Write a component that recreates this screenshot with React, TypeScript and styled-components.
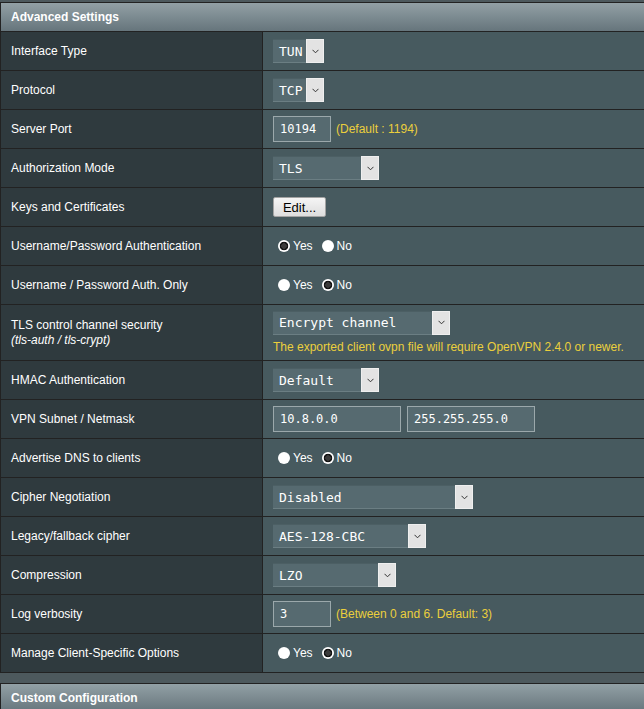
import React from "react";
import styled, { createGlobalStyle } from "styled-components";

const colors = {
  page: "#4D595D",
  border: "#222",
  th: "#2F3A3E",
  td: "#475A5F",
  field: "#566A70",
  hint: "#EBCF3C",
};

const GlobalStyle = createGlobalStyle`
  html, body {
    margin: 0;
    padding: 0;
    background: ${colors.page};
    overflow: hidden;
  }
  body {
    font-family: "Liberation Sans", Arial, sans-serif;
    font-size: 12px;
    color: #fff;
  }
`;

const Page = styled.div`
  padding-top: 2px;
`;

const FormTable = styled.section<{ $gap?: number }>`
  width: 660px;
  border-top: 1px solid ${colors.border};
  border-left: 1px solid ${colors.border};
  margin-top: ${(p) => p.$gap ?? 0}px;
`;

const TableHead = styled.div`
  height: 29px;
  box-sizing: border-box;
  display: flex;
  align-items: center;
  padding-left: 10px;
  font-size: 12px;
  font-weight: bold;
  color: #fff;
  background: linear-gradient(#92a0a5 0%, #66757c 100%);
  border-bottom: 1px solid ${colors.border};
`;

const Row = styled.div<{ $height?: number }>`
  display: grid;
  grid-template-columns: 262px 1fr;
  height: ${(p) => p.$height ?? 39}px;
  box-sizing: border-box;
  border-bottom: 1px solid ${colors.border};
`;

const Th = styled.div`
  background: ${colors.th};
  border-right: 1px solid ${colors.border};
  padding-left: 10px;
  display: flex;
  flex-direction: column;
  justify-content: center;
  line-height: 15px;
  font-size: 12px;
`;

const SubLabel = styled.i`
  font-style: italic;
`;

const Td = styled.div`
  background: ${colors.td};
  padding-left: 10px;
  display: flex;
  flex-direction: column;
  justify-content: center;
  align-items: flex-start;
`;

const Line = styled.div`
  display: flex;
  align-items: center;
`;

const SelectBox = styled.div<{ $width: number }>`
  width: ${(p) => p.$width}px;
  height: 24px;
  box-sizing: border-box;
  display: flex;
  background: ${colors.field};
  border-top: 1px solid #4c5f64;
  border-bottom: 1px solid #6b7e83;
`;

const SelectValue = styled.span`
  flex: 1;
  display: flex;
  align-items: center;
  padding-left: 6px;
  font-family: "DejaVu Sans Mono", "Liberation Mono", monospace;
  font-size: 13px;
  color: #fff;
`;

const ArrowBox = styled.span`
  width: 18px;
  margin: -1px 0;
  display: flex;
  align-items: center;
  justify-content: center;
  background: #e3e3e3;
  box-shadow: inset 0 0 0 1px #efefef;
`;

const TextInput = styled.input<{ $width: number }>`
  width: ${(p) => p.$width}px;
  height: 26px;
  box-sizing: border-box;
  margin: 0 6px 0 0;
  padding: 0 6px;
  background: ${colors.field};
  border: 1px solid #9ba8ab;
  color: #fff;
  font-family: "DejaVu Sans Mono", "Liberation Mono", monospace;
  font-size: 12px;
  outline: none;
`;

const Hint = styled.span<{ $top?: number }>`
  color: ${colors.hint};
  font-size: 12px;
  line-height: 15px;
  margin-top: ${(p) => p.$top ?? 0}px;
  margin-left: ${(p) => (p.$top ? 0 : -1)}px;
`;

const Button = styled.button`
  width: 53px;
  height: 20px;
  box-sizing: border-box;
  padding: 0;
  font-family: "Liberation Sans", Arial, sans-serif;
  font-size: 13px;
  color: #000;
  background: linear-gradient(#f5f5f5, #dddddd);
  border: 1px solid #a3a3a3;
  border-radius: 2px;
`;

const RadioInput = styled.input`
  appearance: none;
  width: 12px;
  height: 12px;
  margin: 0 3px 0 5px;
  border-radius: 50%;
  background: #fff;
  &:checked {
    background: radial-gradient(circle, #3a3a3a 0 2.5px, #141414 3px 4px, #fff 4.6px);
  }
`;

const RadioLabel = styled.label`
  display: flex;
  align-items: center;
  margin-right: 4px;
  font-size: 12px;
  color: #fff;
`;

const Chevron = () => (
  <svg width="7" height="5" viewBox="0 0 7 5">
    <polyline points="0.5,0.8 3.5,3.8 6.5,0.8" fill="none" stroke="#333" strokeWidth="1" />
  </svg>
);

const Select = ({ value, width }: { value: string; width: number }) => (
  <SelectBox $width={width}>
    <SelectValue>{value}</SelectValue>
    <ArrowBox>
      <Chevron />
    </ArrowBox>
  </SelectBox>
);

const YesNo = ({ name, yes }: { name: string; yes: boolean }) => (
  <Line>
    <RadioLabel>
      <RadioInput type="radio" name={name} defaultChecked={yes} />
      Yes
    </RadioLabel>
    <RadioLabel>
      <RadioInput type="radio" name={name} defaultChecked={!yes} />
      No
    </RadioLabel>
  </Line>
);

type Setting = {
  label: string;
  sub?: string;
  height?: number;
  field: React.ReactNode;
};

const settings: Setting[] = [
  { label: "Interface Type", field: <Select value="TUN" width={51} /> },
  { label: "Protocol", field: <Select value="TCP" width={51} /> },
  {
    label: "Server Port",
    field: (
      <Line>
        <TextInput $width={58} defaultValue="10194" />
        <Hint>(Default : 1194)</Hint>
      </Line>
    ),
  },
  { label: "Authorization Mode", field: <Select value="TLS" width={106} /> },
  { label: "Keys and Certificates", field: <Button>Edit...</Button> },
  { label: "Username/Password Authentication", field: <YesNo name="userpass" yes /> },
  { label: "Username / Password Auth. Only", field: <YesNo name="authonly" yes={false} /> },
  {
    label: "TLS control channel security",
    sub: "(tls-auth / tls-crypt)",
    height: 56,
    field: (
      <>
        <Select value="Encrypt channel" width={177} />
        <Hint $top={5}>The exported client ovpn file will require OpenVPN 2.4.0 or newer.</Hint>
      </>
    ),
  },
  { label: "HMAC Authentication", field: <Select value="Default" width={106} /> },
  {
    label: "VPN Subnet / Netmask",
    field: (
      <Line>
        <TextInput $width={128} defaultValue="10.8.0.0" />
        <TextInput $width={128} defaultValue="255.255.255.0" />
      </Line>
    ),
  },
  { label: "Advertise DNS to clients", field: <YesNo name="dns" yes={false} /> },
  { label: "Cipher Negotiation", field: <Select value="Disabled" width={200} /> },
  { label: "Legacy/fallback cipher", field: <Select value="AES-128-CBC" width={153} /> },
  { label: "Compression", field: <Select value="LZO" width={123} /> },
  {
    label: "Log verbosity",
    field: (
      <Line>
        <TextInput $width={58} defaultValue="3" />
        <Hint>(Between 0 and 6. Default: 3)</Hint>
      </Line>
    ),
  },
  { label: "Manage Client-Specific Options", field: <YesNo name="ccd" yes={false} /> },
];

const App = () => (
  <Page>
    <GlobalStyle />
    <FormTable>
      <TableHead>Advanced Settings</TableHead>
      {settings.map((s) => (
        <Row key={s.label} $height={s.height}>
          <Th>
            <span>{s.label}</span>
            {s.sub && <SubLabel>{s.sub}</SubLabel>}
          </Th>
          <Td>{s.field}</Td>
        </Row>
      ))}
    </FormTable>
    <FormTable $gap={10}>
      <TableHead>Custom Configuration</TableHead>
    </FormTable>
  </Page>
);

export default App;
